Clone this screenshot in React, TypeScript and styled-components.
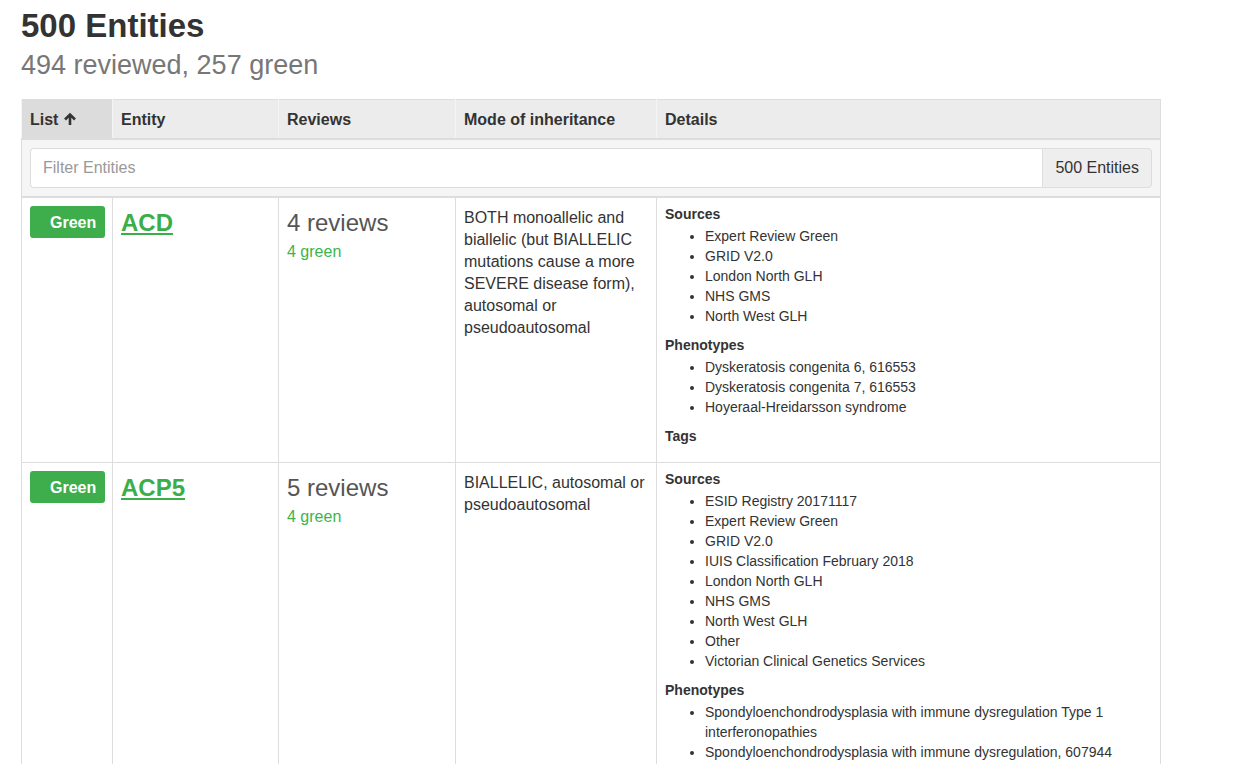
import React from "react";
import styled, { createGlobalStyle } from "styled-components";

const GlobalStyle = createGlobalStyle`
  body {
    margin: 0;
    background: #fff;
    color: #333;
    font-family: "Liberation Sans", Arial, sans-serif;
  }
`;

const Page = styled.div`
  padding: 8px 0 40px 21px;
`;

const Title = styled.h1`
  margin: 0;
  font-size: 33px;
  line-height: 1.1;
  font-weight: bold;
  color: #333;
`;

const Subtitle = styled.h2`
  margin: 7px 0 0;
  font-size: 27px;
  line-height: 1.1;
  font-weight: normal;
  color: #777;
`;

const Table = styled.table`
  margin-top: 18px;
  width: 1139px;
  table-layout: fixed;
  border-collapse: collapse;
  border: 1px solid #ddd;
`;

const HeadCell = styled.th<{ $sorted?: boolean }>`
  padding: 9px 8px 7px;
  text-align: left;
  font-size: 16px;
  line-height: 22px;
  font-weight: bold;
  color: #333;
  background: ${(p) => (p.$sorted ? "#dcdcdc" : "#ececec")};
  border-left: 1px solid #f4f4f4;
  border-bottom: 2px solid #ddd;
  white-space: nowrap;
`;

const SortIcon = styled.svg`
  margin-left: 5px;
  vertical-align: -1px;
`;

const FilterCell = styled.td`
  padding: 8px;
  background: #f5f5f5;
  border-bottom: 2px solid #ddd;
`;

const InputGroup = styled.div`
  display: flex;
  height: 40px;
`;

const FilterInput = styled.input`
  flex: 1;
  min-width: 0;
  height: 40px;
  box-sizing: border-box;
  padding: 0 12px;
  border: 1px solid #ddd;
  border-right: none;
  border-radius: 4px 0 0 4px;
  background: #fff;
  font-family: inherit;
  font-size: 16px;
  color: #333;
  outline: none;

  &::placeholder {
    color: #999;
  }
`;

const Addon = styled.span`
  display: flex;
  align-items: center;
  padding: 0 12px;
  border: 1px solid #ddd;
  border-radius: 0 4px 4px 0;
  background: #eee;
  font-size: 16px;
  color: #333;
  white-space: nowrap;
`;

const Cell = styled.td`
  padding: 8px;
  vertical-align: top;
  border: 1px solid #ddd;
  font-size: 16px;
  line-height: 22px;
  color: #333;
`;

const Badge = styled.span`
  display: inline-block;
  height: 32px;
  line-height: 33px;
  padding: 0 9px 0 20px;
  border-radius: 3px;
  background: #3dae4b;
  color: #fff;
  font-size: 16px;
  font-weight: bold;
`;

const EntityLink = styled.a`
  display: inline-block;
  font-size: 24px;
  line-height: 33px;
  font-weight: bold;
  color: #3aae49;
  text-decoration: underline;
  text-underline-offset: 2px;
`;

const ReviewCount = styled.div`
  font-size: 24px;
  line-height: 33px;
  color: #555;
  margin-bottom: 2px;
`;

const GreenCount = styled.div`
  font-size: 16px;
  line-height: 22px;
  color: #3cb44b;
`;

const ModeText = styled.div`
  padding-top: 1px;
`;

const DetailHeading = styled.h5`
  margin: 0 0 4px;
  font-size: 14px;
  line-height: 16px;
  font-weight: bold;
  color: #333;
`;

const DetailList = styled.ul<{ $gap?: number }>`
  margin: 0 0 ${(p) => (p.$gap ?? 11)}px;
  padding-left: 40px;
  font-size: 14px;
  line-height: 20px;
  color: #333;
`;

type Entity = {
  name: string;
  reviews: number;
  green: number;
  moi: string;
  sources: string[];
  phenotypes: string[];
};

const entities: Entity[] = [
  {
    name: "ACD",
    reviews: 4,
    green: 4,
    moi: "BOTH monoallelic and biallelic (but BIALLELIC mutations cause a more SEVERE disease form), autosomal or pseudoautosomal",
    sources: [
      "Expert Review Green",
      "GRID V2.0",
      "London North GLH",
      "NHS GMS",
      "North West GLH",
    ],
    phenotypes: [
      "Dyskeratosis congenita 6, 616553",
      "Dyskeratosis congenita 7, 616553",
      "Hoyeraal-Hreidarsson syndrome",
    ],
  },
  {
    name: "ACP5",
    reviews: 5,
    green: 4,
    moi: "BIALLELIC, autosomal or pseudoautosomal",
    sources: [
      "ESID Registry 20171117",
      "Expert Review Green",
      "GRID V2.0",
      "IUIS Classification February 2018",
      "London North GLH",
      "NHS GMS",
      "North West GLH",
      "Other",
      "Victorian Clinical Genetics Services",
    ],
    phenotypes: [
      "Spondyloenchondrodysplasia with immune dysregulation Type 1 interferonopathies",
      "Spondyloenchondrodysplasia with immune dysregulation, 607944",
    ],
  },
];

const App: React.FC = () => {
  return (
    <Page>
      <GlobalStyle />
      <Title>500 Entities</Title>
      <Subtitle>494 reviewed, 257 green</Subtitle>
      <Table>
        <colgroup>
          <col style={{ width: 91 }} />
          <col style={{ width: 166 }} />
          <col style={{ width: 177 }} />
          <col style={{ width: 201 }} />
          <col style={{ width: 504 }} />
        </colgroup>
        <thead>
          <tr>
            <HeadCell $sorted>
              List
              <SortIcon width="14" height="14" viewBox="0 0 14 14">
                <path
                  d="M7 13V2.5M2 7.5L7 2.5L12 7.5"
                  fill="none"
                  stroke="#333"
                  strokeWidth="2.6"
                />
              </SortIcon>
            </HeadCell>
            <HeadCell>Entity</HeadCell>
            <HeadCell>Reviews</HeadCell>
            <HeadCell>Mode of inheritance</HeadCell>
            <HeadCell>Details</HeadCell>
          </tr>
          <tr>
            <FilterCell colSpan={5}>
              <InputGroup>
                <FilterInput placeholder="Filter Entities" />
                <Addon>500 Entities</Addon>
              </InputGroup>
            </FilterCell>
          </tr>
        </thead>
        <tbody>
          {entities.map((e) => (
            <tr key={e.name}>
              <Cell>
                <Badge>Green</Badge>
              </Cell>
              <Cell>
                <EntityLink href="#">{e.name}</EntityLink>
              </Cell>
              <Cell>
                <ReviewCount>{e.reviews} reviews</ReviewCount>
                <GreenCount>{e.green} green</GreenCount>
              </Cell>
              <Cell>
                <ModeText>{e.moi}</ModeText>
              </Cell>
              <Cell>
                <DetailHeading>Sources</DetailHeading>
                <DetailList>
                  {e.sources.map((s) => (
                    <li key={s}>{s}</li>
                  ))}
                </DetailList>
                <DetailHeading>Phenotypes</DetailHeading>
                <DetailList>
                  {e.phenotypes.map((p) => (
                    <li key={p}>{p}</li>
                  ))}
                </DetailList>
                <DetailHeading>Tags</DetailHeading>
                <DetailList $gap={10} />
              </Cell>
            </tr>
          ))}
        </tbody>
      </Table>
    </Page>
  );
};

export default App;
